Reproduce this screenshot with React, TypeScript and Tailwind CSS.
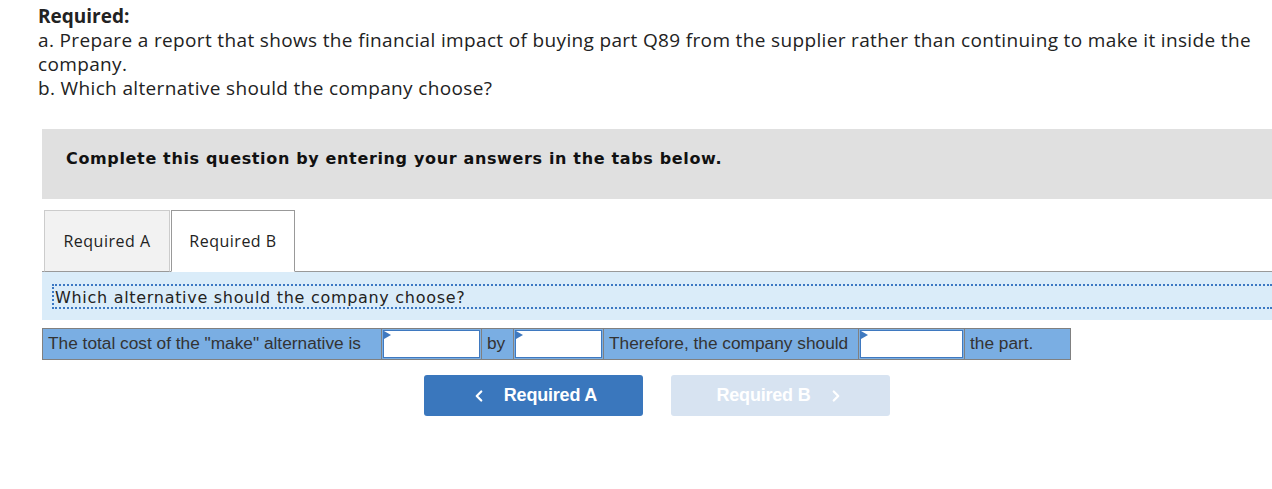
import { ChevronLeft, ChevronRight } from 'lucide-react'

function AnswerInput({ width }: { width: string }) {
  return (
    <div className={`relative flex h-full shrink-0 items-stretch bg-[#7aaee3] px-[1px] py-[1px] ${width}`}>
      <div className="h-full w-full border border-[#3f79c0] bg-white" />
      <span className="absolute left-[2px] top-[2px] h-0 w-0 border-y-[4px] border-l-[7px] border-y-transparent border-l-[#3f79c0]" />
    </div>
  )
}

function Cell({ children, width }: { children: React.ReactNode; width: string }) {
  return (
    <div className={`flex h-full shrink-0 items-center border-r border-[#808080] bg-[#7aaee3] pl-[5px] text-[17.3px] text-[#333] ${width}`}>
      {children}
    </div>
  )
}

export default function App() {
  return (
    <div className="min-h-[489px] w-[1272px] bg-white pt-[4px]">
      <div className="pl-[38px] pr-[12px] font-['Open_Sans',sans-serif] text-[19px] leading-[24px] tracking-[0.35px] text-[#222]">
        <p className="font-bold tracking-normal">Required:</p>
        <p>
          a. Prepare a report that shows the financial impact of buying part Q89 from the supplier rather than continuing to make it inside the company.
        </p>
        <p>b. Which alternative should the company choose?</p>
      </div>

      <div className="ml-[42px] mt-[29px]">
        <div className="flex h-[70px] items-center bg-[#e0e0e0] pb-[10px] pl-[24px] font-['DejaVu_Sans',sans-serif] text-[16px] font-bold tracking-[0.65px] text-[#111]">
          Complete this question by entering your answers in the tabs below.
        </div>

        <div className="mt-[11px] flex h-[62px] items-end gap-[1px] border-b border-[#999] pl-[2px] font-['Open_Sans',sans-serif] text-[16px] tracking-[0.5px] text-[#222]">
          <div className="-mb-px flex h-[62px] w-[126px] items-center justify-center border border-b-[#999] border-[#ccc] bg-[#f2f2f2]">
            Required A
          </div>
          <div className="-mb-px flex h-[62px] w-[124px] items-center justify-center border border-b-white border-[#999] bg-white">
            Required B
          </div>
        </div>

        <div className="bg-[#daecf9] pb-[11px] pl-[10px] pt-[12px]">
          <div className="flex h-[25px] items-center border-y-2 border-l-2 border-dotted border-[#3b78c3] pl-[1px] pt-[2px] font-['DejaVu_Sans',sans-serif] text-[16px] tracking-[0.7px] text-[#222]">
            Which alternative should the company choose?
          </div>
        </div>

        <div className="mt-[8px] flex h-[32px] w-fit items-stretch border border-[#808080] font-['Liberation_Sans',sans-serif]">
          <Cell width="w-[339px]">The total cost of the "make" alternative is</Cell>
          <AnswerInput width="w-[99px]" />
          <Cell width="w-[33px] border-l">by</Cell>
          <AnswerInput width="w-[89px]" />
          <Cell width="w-[256px] border-l">Therefore, the company should</Cell>
          <AnswerInput width="w-[105px]" />
          <Cell width="w-[106px] border-l border-r-0">the part.</Cell>
        </div>

        <div className="mt-[15px] flex justify-center gap-[28px] font-['Liberation_Sans',sans-serif] text-[18px] font-bold tracking-[-0.2px]">
          <button type="button" className="flex h-[41px] w-[219px] items-center justify-center gap-[16px] rounded-[3px] bg-[#3a77bd] text-white">
            <ChevronLeft className="h-[18px] w-[18px]" strokeWidth={3} />
            Required A
          </button>
          <button type="button" className="flex h-[41px] w-[219px] items-center justify-center gap-[16px] rounded-[3px] bg-[#d7e3f1] text-white">
            Required B
            <ChevronRight className="h-[18px] w-[18px]" strokeWidth={3} />
          </button>
        </div>
      </div>
    </div>
  )
}
